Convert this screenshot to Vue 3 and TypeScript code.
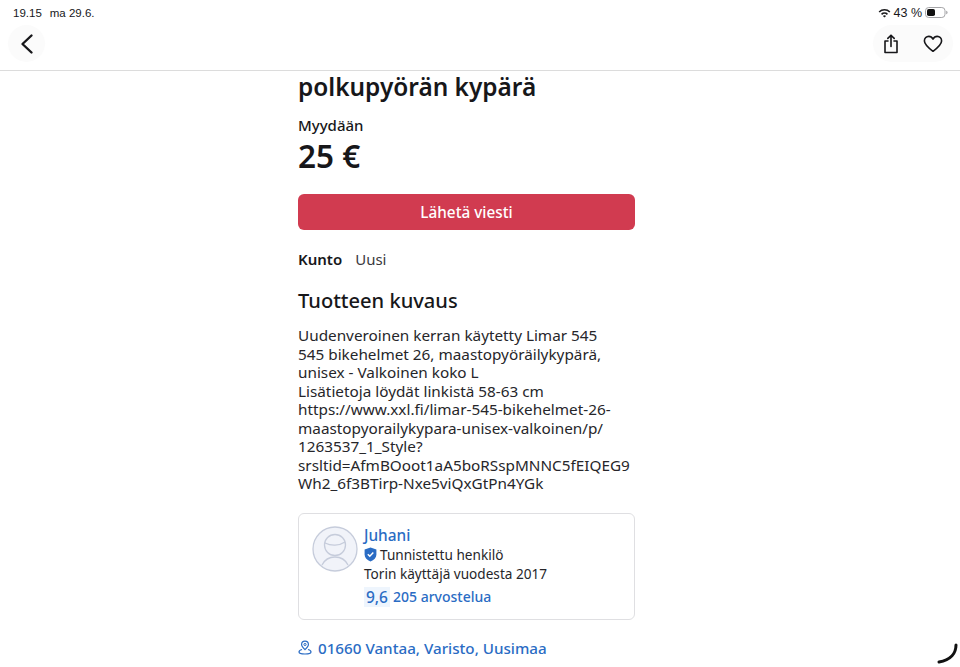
<script setup lang="ts">
const description = [
  'Uudenveroinen kerran käytetty Limar 545',
  '545 bikehelmet 26, maastopyöräilykypärä,',
  'unisex - Valkoinen koko L',
  'Lisätietoja löydät linkistä 58-63 cm',
  'https://www.xxl.fi/limar-545-bikehelmet-26-',
  'maastopyorailykypara-unisex-valkoinen/p/',
  '1263537_1_Style?',
  'srsltid=AfmBOoot1aA5boRSspMNNC5fEIQEG9',
  'Wh2_6f3BTirp-Nxe5viQxGtPn4YGk',
];
</script>

<template>
  <div class="page">
    <div class="status">
      <div class="status-left">
        <span>19.15</span>
        <span>ma 29.6.</span>
      </div>
      <div class="status-right">
        <svg width="13" height="10" viewBox="0 0 13 10">
          <path d="M0.6 3.4a8.4 8.4 0 0 1 11.8 0l-1.1 1.2a6.8 6.8 0 0 0-9.6 0z" fill="#1c1c1e" />
          <path d="M3 5.7a5 5 0 0 1 7 0l-1.1 1.2a3.4 3.4 0 0 0-4.8 0z" fill="#1c1c1e" />
          <path d="M6.5 9.6 4.9 8a2.3 2.3 0 0 1 3.2 0z" fill="#1c1c1e" />
        </svg>
        <span>43 %</span>
        <svg width="23" height="11" viewBox="0 0 23 11">
          <rect x="0.5" y="0.5" width="19.5" height="10" rx="3.2" fill="none" stroke="#a5a5a8" />
          <rect x="2" y="2" width="8" height="7" rx="1.8" fill="#111" />
          <path d="M21.2 3.8c1 .3 1.4.9 1.4 1.7s-.4 1.4-1.4 1.7z" fill="#a5a5a8" />
        </svg>
      </div>
    </div>

    <header class="topbar">
      <button class="round back" type="button" aria-label="Takaisin">
        <svg width="16" height="22" viewBox="0 0 16 22">
          <path d="M12.5 2.5 3.5 11l9 8.5" fill="none" stroke="#17171a" stroke-width="2.4" stroke-linecap="round" stroke-linejoin="round" />
        </svg>
      </button>
      <div class="round actions">
        <svg width="16" height="20" viewBox="0 0 16 20">
          <path d="M5 7H2v11.5h12V7h-3M8 12.5V1.5M4.8 4.4 8 1.2l3.2 3.2" fill="none" stroke="#17171a" stroke-width="1.6" stroke-linecap="round" stroke-linejoin="round" />
        </svg>
        <svg width="20" height="18" viewBox="0 0 20 18">
          <path d="M10 16.3C5.5 12.8 1.4 9.6 1.4 5.9c0-2.6 2-4.5 4.4-4.5 1.8 0 3.3 1 4.2 2.7.9-1.7 2.4-2.7 4.2-2.7 2.4 0 4.4 1.9 4.4 4.5 0 3.7-4.1 6.9-8.6 10.4z" fill="none" stroke="#17171a" stroke-width="1.6" stroke-linejoin="round" />
        </svg>
      </div>
    </header>

    <main class="content">
      <h1>polkupyörän kypärä</h1>
      <div class="trade">Myydään</div>
      <div class="price">25 €</div>
      <button class="message" type="button">Lähetä viesti</button>
      <div class="condition">
        <strong>Kunto</strong>
        <span>Uusi</span>
      </div>
      <h2>Tuotteen kuvaus</h2>
      <p class="description">
        <span v-for="line in description" :key="line">{{ line }}</span>
      </p>

      <section class="seller">
        <svg class="avatar" width="46" height="46" viewBox="0 0 46 46">
          <circle cx="23" cy="23" r="22" fill="#f1f3f9" stroke="#c6ccdb" stroke-width="1.3" />
          <circle cx="23" cy="19" r="10.5" fill="none" stroke="#c6ccdb" stroke-width="1.3" />
          <path d="M13 17c6 3 14 3 20-1" fill="none" stroke="#c6ccdb" stroke-width="1.3" />
          <path d="M10 39c3-6 8-8 13-8s10 2 13 8" fill="none" stroke="#c6ccdb" stroke-width="1.3" />
        </svg>
        <div class="seller-info">
          <div class="seller-name">Juhani</div>
          <div class="verified">
            <svg width="13" height="15" viewBox="0 0 13 15">
              <path d="M6.5.6 12.4 2.5v5c0 3.3-2.4 5.7-5.9 7-3.5-1.3-5.9-3.7-5.9-7v-5z" fill="#2a6cc4" />
              <path d="M3.8 7.2 5.8 9.2 9.3 5.5" fill="none" stroke="#fff" stroke-width="1.5" />
            </svg>
            <span>Tunnistettu henkilö</span>
          </div>
          <div class="since">Torin käyttäjä vuodesta 2017</div>
          <div class="rating">
            <span class="score">9,6</span>
            <span class="reviews">205 arvostelua</span>
          </div>
        </div>
      </section>

      <div class="location">
        <svg width="14" height="15" viewBox="0 0 14 15">
          <path d="M7 9.6C5.3 8 3.6 6.4 3.6 4.5a3.4 3.4 0 0 1 6.8 0c0 1.9-1.7 3.5-3.4 5.1z" fill="none" stroke="#2a6cc4" stroke-width="1.2" />
          <circle cx="7" cy="4.5" r="1.1" fill="none" stroke="#2a6cc4" stroke-width="1" />
          <path d="M4 9.5C2.2 10 1 10.9 1 12c0 1.3 1.5 2 6 2s6-.7 6-2c0-1.1-1.2-2-3-2.5" fill="none" stroke="#2a6cc4" stroke-width="1.2" />
        </svg>
        <span>01660 Vantaa, Varisto, Uusimaa</span>
      </div>
    </main>

    <svg class="corner" width="22" height="22" viewBox="0 0 22 22">
      <path d="M19 2c0 8-5 15-17 17" fill="none" stroke="#111" stroke-width="3" stroke-linecap="round" />
    </svg>
  </div>
</template>

<style>
html,
body {
  margin: 0;
  background: #fff;
}
</style>

<style scoped>
.page {
  position: relative;
  width: 960px;
  height: 667px;
  overflow: hidden;
  background: #fff;
  color: #17171a;
  font-family: "Noto Sans", "Open Sans", sans-serif;
}

.status {
  display: flex;
  justify-content: space-between;
  align-items: center;
  height: 13px;
  padding: 6px 12px 0 13px;
  font-family: "Liberation Sans", Arial, sans-serif;
  font-size: 11.5px;
}

.status-left {
  display: flex;
  gap: 8px;
}

.status-right {
  display: flex;
  align-items: center;
  gap: 3px;
  font-size: 12.5px;
}

.topbar {
  display: flex;
  justify-content: space-between;
  align-items: flex-start;
  height: 45px;
  padding: 6px 7px 0 8px;
  border-bottom: 1px solid #dcdcdc;
}

.round {
  display: flex;
  align-items: center;
  justify-content: center;
  height: 37px;
  background: #fbfbfb;
  border: 0;
  border-radius: 19px;
}

.back {
  width: 37px;
  padding: 0;
}

.actions {
  width: 80px;
  gap: 24px;
}

.content {
  width: 337px;
  margin-left: 298px;
}

h1 {
  margin: 0;
  font-size: 24.4px;
  line-height: 32px;
  font-weight: 600;
}

.trade {
  margin-top: 12px;
  font-size: 15px;
  line-height: 20px;
  font-weight: 500;
}

.price {
  margin-top: 3px;
  font-size: 31.5px;
  line-height: 36px;
  font-weight: 600;
}

.message {
  display: block;
  width: 100%;
  height: 36px;
  margin-top: 20px;
  background: #d13b50;
  border: 0;
  border-radius: 6px;
  color: #fff;
  font-family: inherit;
  font-size: 15.3px;
  font-weight: 500;
}

.condition {
  display: flex;
  gap: 13px;
  margin-top: 19px;
  font-size: 15px;
  line-height: 20px;
}

.condition strong {
  font-weight: 600;
}

.condition span {
  color: #3a3a3e;
}

h2 {
  margin: 18px 0 0;
  font-size: 20.1px;
  line-height: 28px;
  font-weight: 500;
}

.description {
  margin: 11px 0 0;
  color: #26262a;
  font-size: 15.3px;
  line-height: 18.5px;
}

.description span {
  display: block;
  white-space: nowrap;
}

.seller {
  display: flex;
  gap: 6px;
  height: 107px;
  box-sizing: border-box;
  margin-top: 20px;
  padding: 12px 13px;
  border: 1px solid #dfdfe2;
  border-radius: 6px;
}

.avatar {
  flex: none;
}

.seller-name {
  color: #2a6cc4;
  font-size: 15.4px;
  line-height: 19px;
  font-weight: 500;
}

.verified {
  display: flex;
  align-items: center;
  gap: 3px;
  margin-top: 1px;
  color: #26262a;
  font-size: 13.6px;
  line-height: 18px;
}

.since {
  color: #26262a;
  font-size: 13.6px;
  line-height: 19px;
}

.rating {
  display: flex;
  align-items: center;
  gap: 3px;
  margin-top: 4px;
  color: #2a6cc4;
  font-weight: 500;
}

.score {
  padding: 0 2px;
  background: #eef5fd;
  font-size: 15.5px;
  line-height: 20px;
}

.reviews {
  font-size: 14px;
}

.location {
  display: flex;
  align-items: center;
  gap: 6px;
  margin-top: 18px;
  color: #2a6cc4;
  font-size: 15.2px;
  line-height: 20px;
  font-weight: 500;
}

.corner {
  position: absolute;
  right: 1px;
  bottom: 2px;
}
</style>
